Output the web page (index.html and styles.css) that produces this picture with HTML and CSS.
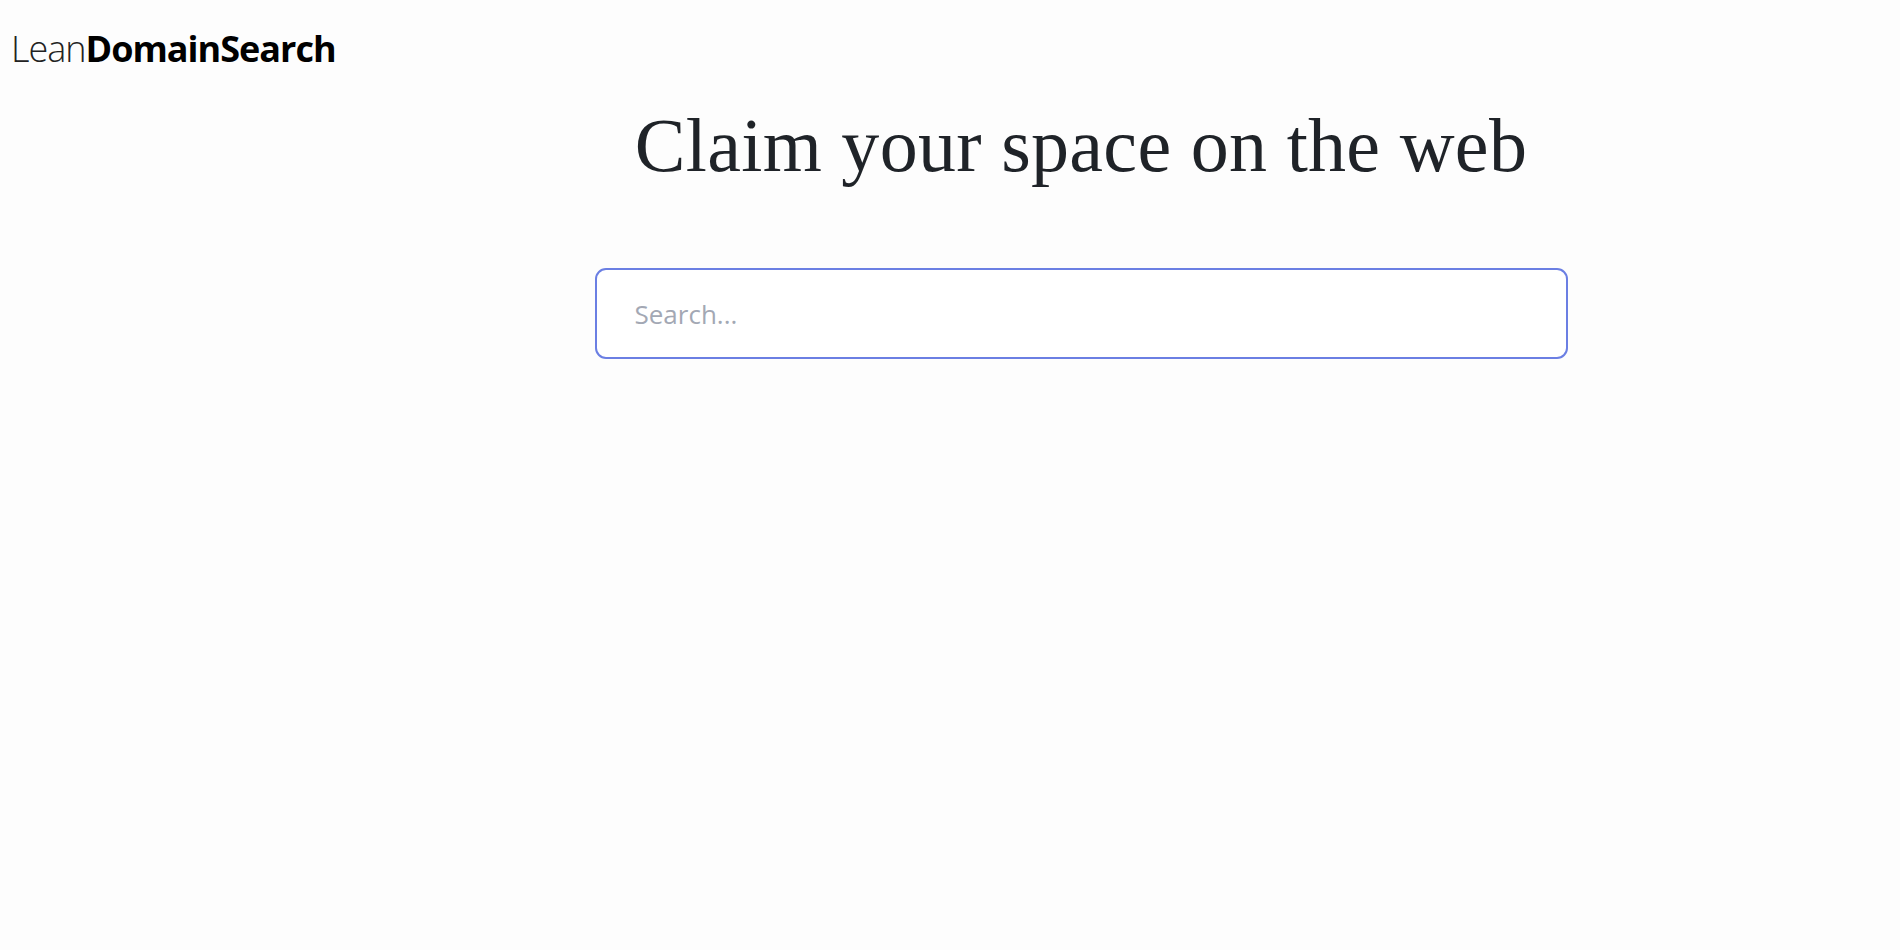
FILE: index.html
```html
<!DOCTYPE html>
<html>
<head>
    <link rel="stylesheet" href="styles.css">
</head>
<body>
    <div class="page">
        <header class="side">
            <a class="logo" href="#"><span class="logo-light">Lean</span><span class="logo-bold">DomainSearch</span></a>
        </header>
        <main class="main">
            <h1>Claim your space on the web</h1>
            <form class="search-form" id="searchForm">
                <input type="text" id="searchInput" class="search-input" placeholder="Search...">
            </form>
        </main>
    </div>
</body>
</html>
```

FILE: styles.css
```css
body {
    margin: 0;
    background-color: #fdfdfd;
    font-family: "Open Sans", Arial, sans-serif;
}
.page {
    display: grid;
    grid-template-columns: 262px 1fr;
    min-height: 100vh;
}
.side {
    padding: 24px 0 0 11px;
}
.logo {
    font-size: 36px;
    color: #000;
    text-decoration: none;
    letter-spacing: -1px;
    white-space: nowrap;
}
.logo-light {
    font-weight: 300;
    color: #222;
}
.logo-bold {
    font-weight: 700;
}
.main {
    display: flex;
    flex-direction: column;
    align-items: center;
    padding-top: 100px;
}
h1 {
    margin: 0 0 77px;
    font-family: "Liberation Serif", "DejaVu Serif", serif;
    font-weight: 400;
    font-size: 76px;
    line-height: 1.2;
    letter-spacing: 0.3px;
    color: #1f2328;
}
.search-form {
    width: 973px;
}
.search-input {
    box-sizing: border-box;
    width: 100%;
    height: 91px;
    padding: 0 38px;
    border: 2px solid #6b7fe3;
    border-radius: 11px;
    background-color: #fff;
    font-family: "Open Sans", Arial, sans-serif;
    font-size: 26px;
    color: #333;
    outline: none;
}
.search-input::placeholder {
    color: #a3a8b4;
}
```
